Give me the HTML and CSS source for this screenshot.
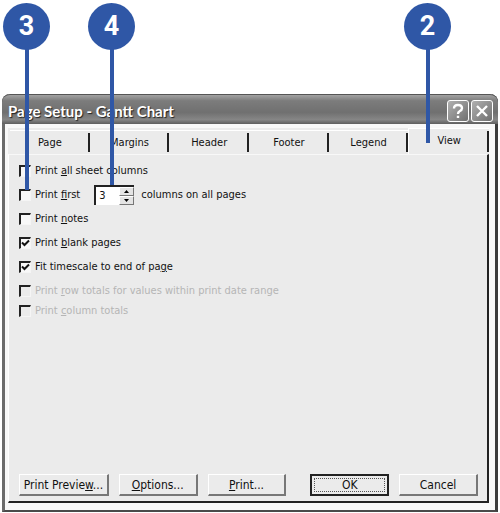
FILE: index.html
```
<!DOCTYPE html>
<html lang="en">
<head>
    <meta charset="UTF-8">
    <title>Page Setup - Gantt Chart</title>
    <link rel="stylesheet" href="styles.css">
</head>
<body>
    <div class="dialog">
        <div class="titlebar">
            <h1>Page Setup - Gantt Chart</h1>
            <button type="button" class="title-button" aria-label="Help">
                <svg width="20" height="20" viewBox="0 0 20 20"><path d="M6 7.5 Q6 4 10 4 Q14 4 14 7.2 Q14 9 11.5 10.3 Q10 11 10 13 M10 14.8 V17"/></svg>
            </button>
            <button type="button" class="title-button" aria-label="Close">
                <svg width="20" height="20" viewBox="0 0 20 20"><path d="M5 5 L15 15 M15 5 L5 15"/></svg>
            </button>
        </div>

        <div class="content">
            <div class="tabs" role="tablist">
                <button type="button" class="tab" role="tab">Page</button>
                <button type="button" class="tab" role="tab">Margins</button>
                <button type="button" class="tab" role="tab">Header</button>
                <button type="button" class="tab" role="tab">Footer</button>
                <button type="button" class="tab" role="tab">Legend</button>
                <button type="button" class="tab active" role="tab" aria-selected="true">View</button>
            </div>

            <div class="panel">
                <div class="options">
                    <div class="option">
                        <input type="checkbox" id="all-columns">
                        <label for="all-columns">Print <u>a</u>ll sheet columns</label>
                    </div>
                    <div class="option">
                        <input type="checkbox" id="first-columns">
                        <label for="first-columns">Print <u>f</u>irst</label>
                        <div class="spinner">
                            <input type="text" id="column-count" value="3">
                            <div class="spinner-buttons">
                                <button type="button" aria-label="More"><svg width="5" height="3" viewBox="0 0 5 3"><path d="M0 3 L2.5 0 L5 3 Z"/></svg></button>
                                <button type="button" aria-label="Fewer"><svg width="5" height="3" viewBox="0 0 5 3"><path d="M0 0 L5 0 L2.5 3 Z"/></svg></button>
                            </div>
                        </div>
                        <label for="column-count">columns on all pages</label>
                    </div>
                    <div class="option">
                        <input type="checkbox" id="notes">
                        <label for="notes">Print <u>n</u>otes</label>
                    </div>
                    <div class="option">
                        <input type="checkbox" id="blank-pages" checked>
                        <label for="blank-pages">Print <u>b</u>lank pages</label>
                    </div>
                    <div class="option">
                        <input type="checkbox" id="timescale" checked>
                        <label for="timescale">Fit timescale to end of pa<u>g</u>e</label>
                    </div>
                    <div class="option disabled">
                        <input type="checkbox" id="row-totals" disabled>
                        <label for="row-totals">Print <u>r</u>ow totals for values within print date range</label>
                    </div>
                    <div class="option disabled last">
                        <input type="checkbox" id="column-totals" disabled>
                        <label for="column-totals">Print <u>c</u>olumn totals</label>
                    </div>
                </div>

                <div class="buttons">
                    <button type="button" class="button wide">Print Previe<u>w</u>...</button>
                    <button type="button" class="button"><u>O</u>ptions...</button>
                    <button type="button" class="button"><u>P</u>rint...</button>
                    <button type="button" class="button default"><span>OK</span></button>
                    <button type="button" class="button">Cancel</button>
                </div>
            </div>
        </div>
    </div>

    <!-- numbered callouts over the dialog -->
    <div class="callout step-3"><span>3</span></div>
    <div class="callout step-4"><span>4</span></div>
    <div class="callout step-2"><span>2</span></div>
</body>
</html>
```
FILE: styles.css
```
* {
    box-sizing: border-box;
}

body {
    margin: 0;
    padding: 94px 2px 2px;
    background-color: #fff;
    color: #111;
    font-family: "DejaVu Sans Condensed", Tahoma, sans-serif;
    font-size: 11px;
    line-height: 16px;
}

button, input {
    margin: 0;
    padding: 0;
    color: inherit;
    font: inherit;
}

.dialog {
    border: 3px solid #6b6b6b;
    border-top: 0;
    border-right-color: #3c3c3c;
    border-bottom: 2px solid #4a4a4a;
    border-radius: 8px 8px 0 0;
    background-color: #f8f8f8;
}

.titlebar {
    display: flex;
    align-items: center;
    gap: 2px;
    height: 30px;
    margin: 0 -3px;
    padding: 2px 5px 0 6px;
    border-top: 1px solid #555;
    border-radius: 8px 8px 0 0;
    background: linear-gradient(#a2a2a2, #7c7c7c 20%, #707070 60%, #868686 85%, #5e5e5e);
}

h1 {
    flex: 1;
    margin: 0;
    color: #fff;
    font-family: Lato, "Trebuchet MS", sans-serif;
    font-size: 15px;
    font-weight: bold;
    text-shadow: 1px 1px 1px #222;
}

.title-button {
    width: 22px;
    height: 22px;
    border: 1px solid #fff;
    border-radius: 3px;
    background: linear-gradient(135deg, #b0b0b0, #707070);
}

.title-button svg {
    display: block;
    fill: none;
    stroke: #fff;
    stroke-width: 2.4;
}

.content {
    padding: 4px 6px 7px 3px;
}

.tabs {
    display: flex;
    align-items: flex-end;
    padding-left: 2px;
    background-color: #ebebeb;
}

.tab {
    position: relative;
    flex: 1;
    height: 24px;
    border: 0;
    border-top: 1px solid #fff;
    background-color: #ebebeb;
}

.tab::after {
    content: "";
    position: absolute;
    top: 2px;
    right: 0;
    bottom: 2px;
    border-right: 2px solid #222;
}

.tab.active {
    height: 26px;
    padding-bottom: 2px;
    border-left: 1px solid #fff;
}

.panel {
    display: flex;
    flex-direction: column;
    min-height: 349px;
    padding: 4px 9px 5px 10px;
    border: 2px solid #222;
    border-top: 1px solid #f8f8f8;
    border-left: 1px solid #fff;
    background-color: #ebebeb;
}

.options {
    flex: 1;
}

.option {
    display: flex;
    align-items: center;
    gap: 4px;
    height: 24px;
}

.option.last {
    height: 16px;
}

.option.disabled {
    color: #b5b5b5;
}

input[type="checkbox"] {
    appearance: none;
    width: 12px;
    height: 12px;
    border: 2px solid #222;
    border-right: 1px solid #f5f5f5;
    border-bottom: 1px solid #f5f5f5;
    background-color: #f8f8f8;
}

input[type="checkbox"]:checked {
    background: #f8f8f8 url("data:image/svg+xml,%3Csvg xmlns='http://www.w3.org/2000/svg' viewBox='0 0 9 9'%3E%3Cpath d='M1 3.5 L3.5 6 L8 1.5' fill='none' stroke='%23111' stroke-width='2'/%3E%3C/svg%3E") center / 9px 9px no-repeat;
}

input[type="checkbox"]:disabled {
    background-color: #ebebeb;
}

.spinner {
    display: flex;
    width: 40px;
    height: 20px;
    margin: 0 3px 0 10px;
    border-top: 2px solid #222;
    border-left: 2px solid #222;
    background-color: #fff;
}

.spinner input {
    flex: 1;
    min-width: 0;
    padding-left: 3px;
    border: 0;
    background: none;
}

.spinner-buttons {
    display: flex;
    flex-direction: column;
    width: 15px;
}

.spinner button {
    display: flex;
    flex: 1;
    align-items: center;
    justify-content: center;
    border: 1px solid #fff;
    border-right-color: #777;
    border-bottom-color: #777;
    background-color: #e4e4e4;
}

.buttons {
    display: flex;
    gap: 10px;
}

.button {
    flex: 1 1 79px;
    height: 22px;
    border: 1px solid #fff;
    border-right: 2px solid #777;
    border-bottom: 2px solid #777;
    background-color: #ebebeb;
    font-size: 12px;
    white-space: nowrap;
}

.button.wide {
    flex-basis: 90px;
}

.button.default {
    margin-left: 14px;
    padding: 2px;
    border: 2px solid #222;
}

.default span {
    display: block;
    border: 1px dotted #555;
    line-height: 12px;
}

.callout {
    position: absolute;
    top: 3px;
    width: 47px;
}

.callout span {
    display: block;
    height: 47px;
    border-radius: 50%;
    background-color: #2f57a6;
    color: #fff;
    font-family: Roboto, "Liberation Sans", sans-serif;
    font-size: 27px;
    font-weight: bold;
    line-height: 47px;
    text-align: center;
}

/* leader line down to the control */
.callout::after {
    content: "";
    display: block;
    width: 4px;
    margin: -1px auto 0;
    background-color: #2f57a6;
}

.step-3 {
    left: 3px;
}

.step-3::after {
    height: 141px;
}

.step-4 {
    left: 88px;
}

.step-4::after {
    height: 136px;
}

.step-2 {
    left: calc(100% - 96px);
}

.step-2::after {
    height: 94px;
}
```
